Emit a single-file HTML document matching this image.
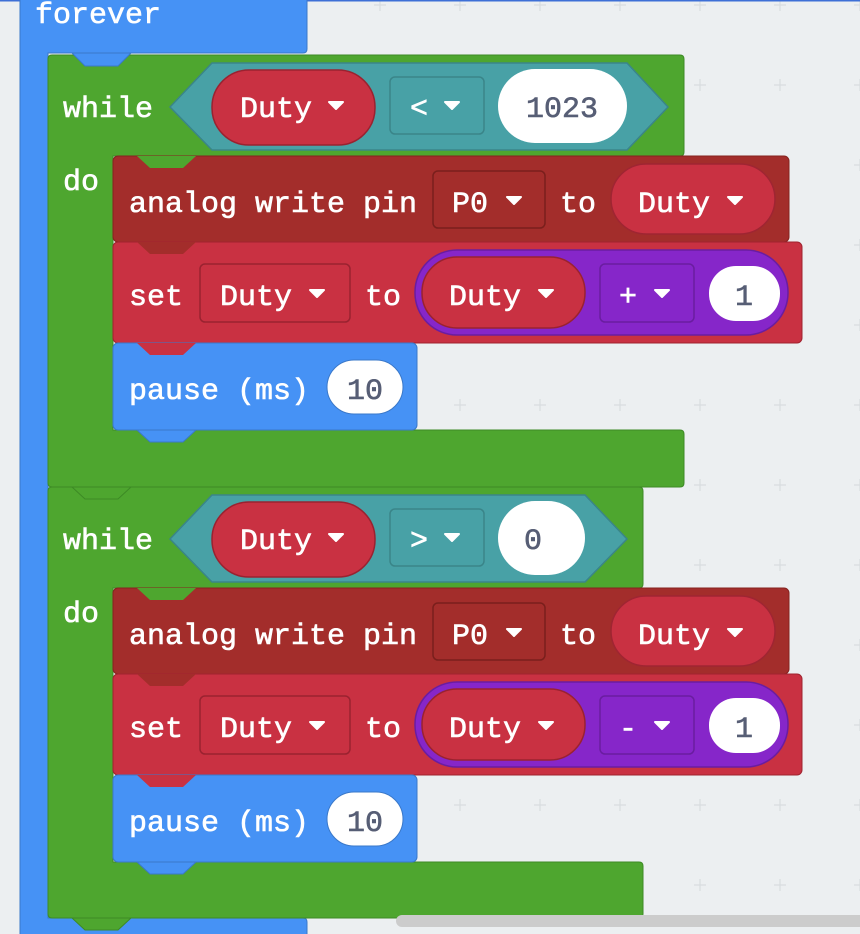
<!DOCTYPE html>
<html><head><style>
html,body{margin:0;padding:0;background:#eceff1;}
svg{display:block;}
text{font-family:"Liberation Mono",monospace;font-size:30px;fill:#fff;stroke:#fff;stroke-width:0.6px;}
.n{fill:#575e75;stroke:#575e75;}
</style></head><body>
<svg width="860" height="934" viewBox="0 0 860 934" xmlns="http://www.w3.org/2000/svg">
<defs>
<pattern id="g" x="0" y="-35" width="80" height="80" patternUnits="userSpaceOnUse">
<path d="M60,34 V46 M54,40 H66" stroke="#d8dcdf" stroke-width="1.2"/>
</pattern>
<g id="tri"><path d="M-7,-3 L7,-3 L0,4 Z" fill="#fff" stroke="#fff" stroke-width="2" stroke-linejoin="round"/></g>
<g id="body">
  <rect x="113" y="156" width="676" height="86" rx="5" fill="#a32d2b" stroke="#86231f"/>
  <text x="129" y="212">analog write pin</text>
  <rect x="433" y="171" width="112" height="57" rx="5" fill="#a32d2b" stroke="#7a1f1c" stroke-width="1.5"/>
  <text x="452" y="212">P0</text>
  <use href="#tri" x="514" y="200"/>
  <text x="560" y="212">to</text>
  <rect x="611" y="164" width="164" height="70" rx="35" fill="#c93142" stroke="#9f2532" stroke-width="1.5"/>
  <text x="638" y="212">Duty</text>
  <use href="#tri" x="735" y="200"/>
  <rect x="113" y="242" width="689" height="101" rx="5" fill="#c93142" stroke="#a0232f"/>
  <text x="129" y="305">set</text>
  <rect x="200" y="264" width="150" height="58" rx="5" fill="#c93142" stroke="#9a2230" stroke-width="1.5"/>
  <text x="220" y="305">Duty</text>
  <use href="#tri" x="317" y="293"/>
  <text x="365" y="305">to</text>
  <rect x="415" y="250" width="373" height="85" rx="42" fill="#8626c9" stroke="#6a1da0" stroke-width="1.5"/>
  <rect x="422" y="257" width="163" height="71" rx="35" fill="#c93142" stroke="#9a2230" stroke-width="1.5"/>
  <text x="449" y="305">Duty</text>
  <use href="#tri" x="546" y="293"/>
  <rect x="600" y="264" width="94" height="58" rx="5" fill="#8626c9" stroke="#6a1da0" stroke-width="1.5"/>
  <use href="#tri" x="662" y="293"/>
  <rect x="709" y="266" width="71" height="55" rx="27" fill="#fff"/>
  <text x="735" y="305" class="n">1</text>
  <rect x="113" y="343" width="304" height="87" rx="5" fill="#4692f5" stroke="#3a78c9"/>
  <text x="129" y="399">pause (ms)</text>
  <rect x="327" y="360" width="76" height="54" rx="27" fill="#fff" stroke="#3a78c9"/>
  <text x="347" y="399" class="n">10</text>
</g>
</defs>
<rect width="860" height="934" fill="#eceff1"/>
<rect x="20" width="840" height="934" fill="url(#g)"/>
<rect x="0" y="0" width="860" height="1.5" fill="#3d6fd6"/>

<path d="M20,-5 H307 V49 Q307,53 303,53 H48 V918 H303 Q307,918 307,922 V940 H20 Z" fill="#4692f5" stroke="#3a78c9"/>
<text x="35" y="23">forever</text>

<path d="M52,55 H680 Q684,55 684,59 V152 Q684,156 680,156 H113 V430 H680 Q684,430 684,434 V483 Q684,487 680,487 H52 Q48,487 48,483 V59 Q48,55 52,55 Z" fill="#4ea62f" stroke="#3d8a25"/>
<path d="M72,53 L85,66 L118,66 L131,53 Z" fill="#4692f5" stroke="#3a78c9"/>
<path d="M170,107 L212,63 L627,63 L668,107 L627,150 L212,150 Z" fill="#48a1a6" stroke="#3a8589" stroke-width="1.5"/>
<text x="63" y="117">while</text>
<text x="63" y="190">do</text>
<rect x="212" y="70" width="163" height="75" rx="37" fill="#c93142" stroke="#9a2230" stroke-width="1.5"/>
<text x="240" y="117">Duty</text>
<use href="#tri" x="336" y="105"/>
<rect x="390" y="77" width="94" height="57" rx="5" fill="#48a1a6" stroke="#3a8589" stroke-width="1.5"/>
<text x="410" y="117">&lt;</text>
<use href="#tri" x="452" y="105"/>
<rect x="498" y="69" width="129" height="74" rx="37" fill="#fff"/>
<text x="526" y="117" class="n">1023</text>
<use href="#body"/>
<text x="619" y="305">+</text>

<path d="M52,487 H639 Q643,487 643,491 V584 Q643,588 639,588 H113 V862 H639 Q643,862 643,866 V914 Q643,918 639,918 H52 Q48,918 48,914 V491 Q48,487 52,487 Z" fill="#4ea62f" stroke="#3d8a25"/>
<path d="M170,539 L212,495 L585,495 L627,539 L585,582 L212,582 Z" fill="#48a1a6" stroke="#3a8589" stroke-width="1.5"/>
<text x="63" y="549">while</text>
<text x="63" y="622">do</text>
<rect x="212" y="502" width="163" height="75" rx="37" fill="#c93142" stroke="#9a2230" stroke-width="1.5"/>
<text x="240" y="549">Duty</text>
<use href="#tri" x="336" y="537"/>
<rect x="390" y="509" width="94" height="57" rx="5" fill="#48a1a6" stroke="#3a8589" stroke-width="1.5"/>
<text x="410" y="549">&gt;</text>
<use href="#tri" x="452" y="537"/>
<rect x="498" y="501" width="87" height="74" rx="37" fill="#fff"/>
<text x="524" y="549" class="n">0</text>
<g transform="translate(0,432)"><use href="#body"/><text x="619" y="305">-</text></g>

<path d="M72,487 L85,499 L118,499 L131,487 Z" fill="#4ea62f" stroke="#3d8a25"/>
<path d="M72,918 L85,930 L118,930 L131,918 Z" fill="#4ea62f" stroke="#3d8a25"/>
<g>
<path d="M137,156 L150,168 L183,168 L196,156 Z" fill="#4ea62f"/>
<path d="M137,242 L150,254 L183,254 L196,242 Z" fill="#a32d2b"/>
<path d="M137,343 L150,355 L183,355 L196,343 Z" fill="#c93142"/>
<path d="M137,430 L150,442 L183,442 L196,430 Z" fill="#4692f5" stroke="#3a78c9"/>
</g>
<g transform="translate(0,432)">
<path d="M137,156 L150,168 L183,168 L196,156 Z" fill="#4ea62f"/>
<path d="M137,242 L150,254 L183,254 L196,242 Z" fill="#a32d2b"/>
<path d="M137,343 L150,355 L183,355 L196,343 Z" fill="#c93142"/>
<path d="M137,430 L150,442 L183,442 L196,430 Z" fill="#4692f5" stroke="#3a78c9"/>
</g>
<rect x="396" y="915" width="470" height="12" rx="6" fill="#cccccc"/>
</svg>
</body></html>
